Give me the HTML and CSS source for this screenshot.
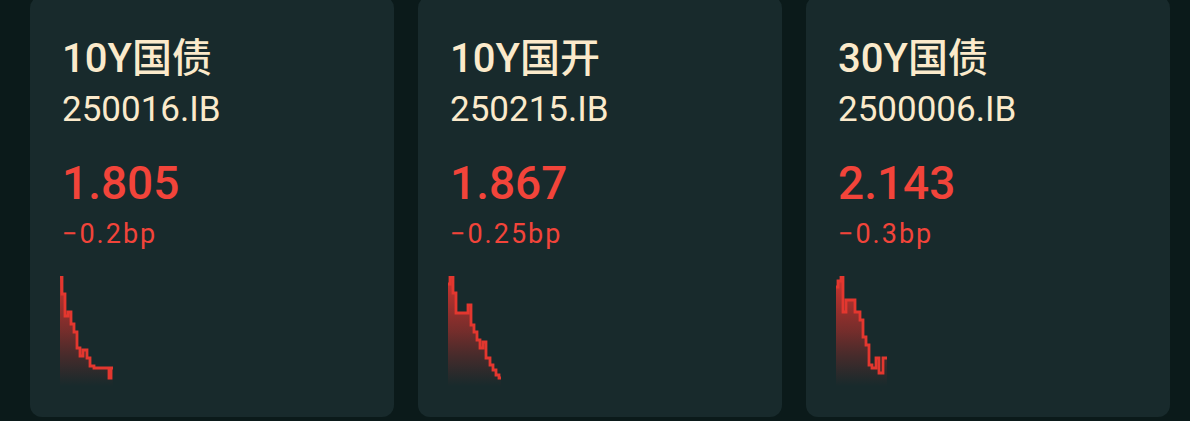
FILE: index.html
```html
<!DOCTYPE html>
<html lang="zh-CN">
<head>
    <meta charset="UTF-8">
    <meta name="viewport" content="width=device-width, initial-scale=1.0">
    <title>Bond Yields</title>
    <link rel="stylesheet" href="styles.css">
</head>
<body>
    <div class="board">
        <div class="card">
            <h2 class="name">10Y国债</h2>
            <p class="code">250016.IB</p>
            <p class="yield">1.805</p>
            <p class="change">−0.2bp</p>
            <svg class="spark" id="spark-1" width="56" height="110" viewBox="0 0 56 110"></svg>
        </div>
        <div class="card">
            <h2 class="name">10Y国开</h2>
            <p class="code">250215.IB</p>
            <p class="yield">1.867</p>
            <p class="change">−0.25bp</p>
            <svg class="spark" id="spark-2" width="56" height="110" viewBox="0 0 56 110"></svg>
        </div>
        <div class="card">
            <h2 class="name">30Y国债</h2>
            <p class="code">2500006.IB</p>
            <p class="yield">2.143</p>
            <p class="change">−0.3bp</p>
            <svg class="spark" id="spark-3" width="56" height="110" viewBox="0 0 56 110"></svg>
        </div>
    </div>

    <script>
        // step series: [x where step starts, y], last entry is the end x
        const series = {
            'spark-1': [[0,1],[2,18],[5,40],[8,36],[11,48],[14,56],[17,72],[20,80],[23,74],[27,82],[30,90],[34,92],[49,102],[51,92],[53]],
            'spark-2': [[0,8],[2,1],[5,17],[8,37],[20,29],[23,49],[26,56],[29,64],[32,72],[35,66],[38,82],[42,89],[45,94],[48,99],[51,102],[53]],
            'spark-3': [[0,11],[2,5],[5,1],[7,36],[10,24],[19,36],[24,44],[27,61],[30,69],[33,89],[36,92],[40,82],[43,97],[47,82],[51]]
        };
        const H = 110;

        function drawSpark(id, pts) {
            const svg = document.getElementById(id);
            let line = `M${pts[0][0]},${pts[0][1]}`;
            for (let i = 1; i < pts.length; i++) {
                line += ` H${pts[i][0]}`;
                if (pts[i].length > 1) line += ` V${pts[i][1]}`;
            }
            const area = `M0,${H} V${pts[0][1]}` + line.slice(line.indexOf(' ')) + ` V${H} Z`;
            svg.innerHTML = `
                <defs>
                    <linearGradient id="${id}-fill" x1="0" y1="0" x2="0" y2="1">
                        <stop offset="0" stop-color="#e8352f" stop-opacity="0.9"/>
                        <stop offset="0.5" stop-color="#c0302b" stop-opacity="0.55"/>
                        <stop offset="1" stop-color="#a02a26" stop-opacity="0"/>
                    </linearGradient>
                </defs>
                <path d="${area}" fill="url(#${id}-fill)"/>
                <path d="${line}" fill="none" stroke="#e3372f" stroke-width="2.8"/>`;
        }

        for (const id in series) drawSpark(id, series[id]);
    </script>
</body>
</html>
```

FILE: styles.css
```css
/* Reset */
body, h2, p {
    margin: 0;
    padding: 0;
}

body {
    background: #0b1a1a;
    font-family: 'Roboto', 'Noto Sans CJK SC', sans-serif;
    overflow: hidden;
}

/* Row of cards */
.board {
    display: flex;
    gap: 24px;
    padding: 0 20px 0 30px;
    margin-top: -4px;
}

.card {
    width: 364px;
    height: 421px;
    box-sizing: border-box;
    padding: 39px 32px 0;
    background: #182a2c;
    border-radius: 12px;
    display: flex;
    flex-direction: column;
    align-items: flex-start;
}

.name {
    font-size: 40px;
    line-height: 48px;
    font-weight: 500;
    color: #fbeacb;
}

.code {
    margin-top: 6px;
    font-size: 35px;
    line-height: 42px;
    color: #fbeacb;
}

.yield {
    margin-top: 24px;
    font-size: 46px;
    line-height: 56px;
    font-weight: 500;
    color: #f2443a;
}

.change {
    margin-top: 7px;
    font-size: 27px;
    line-height: 32px;
    letter-spacing: 2px;
    color: #f2443a;
}

.spark {
    display: block;
    margin-top: 26px;
    margin-left: -2px;
}
```
